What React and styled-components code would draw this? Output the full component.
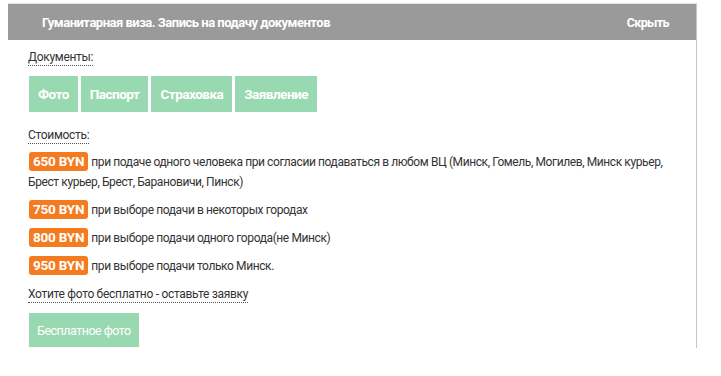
import React from "react";
import styled, { createGlobalStyle } from "styled-components";

const GlobalStyle = createGlobalStyle`
  html, body { margin: 0; padding: 0; background: #fff; }
  body {
    font-family: Roboto, "Liberation Sans", Arial, sans-serif;
    color: #333;
  }
`;

const Page = styled.div`
  padding: 3px 0 0 8px;
`;

const Panel = styled.section`
  width: 689px;
  border-top: 1px solid #e2e2e2;
  border-right: 1px solid #c6c6c6;
  box-sizing: border-box;
  padding-bottom: 1px;
`;

const Header = styled.div`
  height: 36px;
  background: #9a9a9a;
  display: flex;
  align-items: center;
  justify-content: space-between;
  padding: 0 27px 0 34px;
  color: #fff;
  font-weight: bold;
`;

const Title = styled.span`
  font-size: 13px;
  letter-spacing: -0.5px;
`;

const HideLink = styled.span`
  font-size: 12.5px;
  letter-spacing: -0.6px;
`;

const Body = styled.div`
  padding: 10px 20px 0 20px;
  display: flex;
  flex-direction: column;
  align-items: flex-start;
`;

const Label = styled.span`
  display: inline-block;
  font-size: 12px;
  line-height: 15px;
  letter-spacing: -0.3px;
  border-bottom: 1px dotted #555;
  margin: ${(p) => p.$mt || 0}px 0 ${(p) => p.$mb || 0}px 0;
`;

const ButtonRow = styled.div`
  display: flex;
  gap: 3px;
  margin-left: 1px;
`;

const DocButton = styled.span`
  display: flex;
  align-items: center;
  height: ${(p) => (p.$h ? p.$h : 36)}px;
  padding: 0 ${(p) => (p.$px ? p.$px : 9)}px;
  background: #99d9b1;
  color: #fff;
  font-size: ${(p) => (p.$regular ? 12.5 : 13.5)}px;
  font-weight: ${(p) => (p.$regular ? "normal" : "bold")};
  letter-spacing: -0.5px;
`;

const PriceList = styled.div`
  display: flex;
  flex-direction: column;
  gap: 8px;
  margin-top: 8px;
  width: 100%;
`;

const PriceRow = styled.p`
  margin: 0;
  font-size: 12px;
  line-height: 20px;
  letter-spacing: -0.4px;
`;

const Badge = styled.span`
  display: inline-block;
  background: #f47b20;
  color: #fff;
  font-weight: bold;
  font-size: 13.5px;
  line-height: 19px;
  letter-spacing: -0.2px;
  padding: 0 4px;
  border-radius: 3px;
  margin: 0 3px 0 1px;
  vertical-align: top;
`;

const prices = [
  {
    v: "650 BYN",
    t: "при подаче одного человека при согласии подаваться в любом ВЦ (Минск, Гомель, Могилев, Минск курьер, Брест курьер, Брест, Барановичи, Пинск)",
  },
  { v: "750 BYN", t: "при выборе подачи в некоторых городах" },
  { v: "800 BYN", t: "при выборе подачи одного города(не Минск)" },
  { v: "950 BYN", t: "при выборе подачи только Минск." },
];

export default function App() {
  return (
    <>
      <GlobalStyle />
      <Page>
        <Panel>
          <Header>
            <Title>Гуманитарная виза. Запись на подачу документов</Title>
            <HideLink>Скрыть</HideLink>
          </Header>
          <Body>
            <Label $mb={10}>Документы:</Label>
            <ButtonRow>
              <DocButton>Фото</DocButton>
              <DocButton>Паспорт</DocButton>
              <DocButton>Страховка</DocButton>
              <DocButton>Заявление</DocButton>
            </ButtonRow>
            <Label $mt={16}>Стоимость:</Label>
            <PriceList>
              {prices.map((p) => (
                <PriceRow key={p.v}>
                  <Badge>{p.v}</Badge>
                  {p.t}
                </PriceRow>
              ))}
            </PriceList>
            <Label $mt={11} $mb={10}>
              Хотите фото бесплатно - оставьте заявку
            </Label>
            <ButtonRow>
              <DocButton $regular $h={34} $px={8}>
                Бесплатное фото
              </DocButton>
            </ButtonRow>
          </Body>
        </Panel>
      </Page>
    </>
  );
}
